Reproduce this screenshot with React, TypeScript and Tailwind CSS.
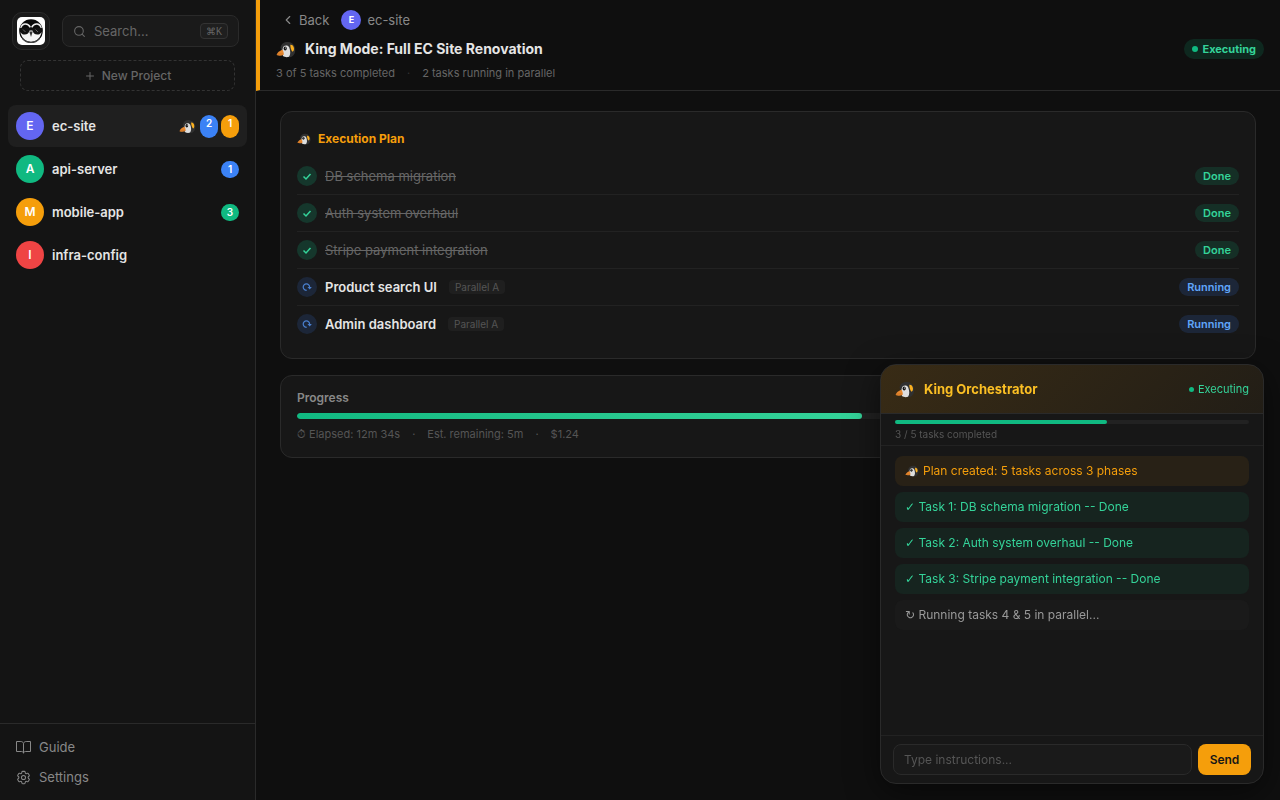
import React from "react";
import { ChevronLeft, Plus, Search } from "lucide-react";
import { clsx } from "clsx";

interface Project {
  name: string;
  letter: string;
  color: string;
  king?: boolean;
  badges: { count: number; color: string }[];
}

const projects: Project[] = [
  {
    name: "ec-site",
    letter: "E",
    color: "bg-[#6366f1]",
    king: true,
    badges: [
      { count: 2, color: "bg-[#3b82f6]" },
      { count: 1, color: "bg-[#f59e0b]" },
    ],
  },
  { name: "api-server", letter: "A", color: "bg-[#10b981]", badges: [{ count: 1, color: "bg-[#3b82f6]" }] },
  { name: "mobile-app", letter: "M", color: "bg-[#f59e0b]", badges: [{ count: 3, color: "bg-[#10b981]" }] },
  { name: "infra-config", letter: "I", color: "bg-[#ef4444]", badges: [] },
];

const tasks = [
  { title: "DB schema migration", done: true },
  { title: "Auth system overhaul", done: true },
  { title: "Stripe payment integration", done: true },
  { title: "Product search UI", done: false, group: "Parallel A" },
  { title: "Admin dashboard", done: false, group: "Parallel A" },
];

const doneMessages = [
  "Task 1: DB schema migration -- Done",
  "Task 2: Auth system overhaul -- Done",
  "Task 3: Stripe payment integration -- Done",
];

function Logo() {
  return (
    <svg viewBox="0 0 28 28" className="h-7 w-7" aria-hidden="true">
      <rect width="28" height="28" rx="5" fill="#fff" />
      <circle cx="14" cy="14" r="11.8" fill="#0a0a0a" />
      <path d="M3.500 15.500C5 22 9 24.700 14 24.700S23 22 24.500 15.500L21 12h-14z" fill="#f5f5f5" />
      <path d="M3.800 11.500C4.500 6.500 10.500 5 13.300 10.300M14.700 10.300C17.500 5 23.500 6.500 24.200 11.500" fill="none" stroke="#eee" strokeWidth="1.500" />
      <path d="M2.600 11.200c3.800-1.300 7.500-.9 11.400.6 3.900-1.500 7.600-1.900 11.400-.6 0 4-2 6.300-5 6.300-2.800 0-4.400-1.800-5-4.100h-2.800c-.6 2.300-2.200 4.100-5 4.100-3 0-5-2.300-5-6.300z" fill="#111" />
      <path d="M6 12.500l2.500 2.500M18.500 12.500L21 15" stroke="#777" strokeWidth="0.8" />
      <path d="M12.300 14.500h3.400L14 20z" fill="#333" />
      <path d="M5.500 21.500C8 24.500 11 25.500 14 25.500s6-1 8.500-4" fill="none" stroke="#444" strokeWidth="1.200" />
    </svg>
  );
}

function PenguinIcon({ className }: { className?: string }) {
  return (
    <svg viewBox="0 0 20 17" className={clsx("shrink-0", className)} aria-hidden="true">
      <path d="M4.500 6.500C5.500 2 9 .5 12.500 1c4 .6 6.500 3.500 6.700 7.500.2 4-2 7.700-5.700 7.700L7 14z" fill="#303030" />
      <path d="M14.300 3.800c2.200-.2 3.600 1.500 3.700 4 0 1.500-.6 2.600-1.500 3-1.400-1.500-2.200-4.500-2.200-7z" fill="#fbb01f" />
      <path d="M7.300 5.800C9 4.200 12 4 13.200 6.500c1.300 3 1.600 7-.2 9.200-1.800.8-4.500.5-6-.7-1-2.500-1-6.500.3-9.200z" fill="#dedede" />
      <path d="M6.300 8.800C3.500 9.800 1.300 11.500.6 14c2 .9 4.800.9 7-.2.4-2-.2-4-1.300-5z" fill="#e8892f" />
      <path d="M1 13.300c2-.4 4.300-.5 6.500-.2" fill="none" stroke="#b8651e" strokeWidth="0.5" />
      <ellipse cx="9.200" cy="7.600" rx="1.600" ry="2" fill="#161616" />
      <circle cx="9.600" cy="7" r="0.500" fill="#fff" />
    </svg>
  );
}

function BookIcon() {
  return (
    <svg viewBox="0 0 15 15" className="h-[15px] w-[15px]" fill="none" stroke="currentColor" aria-hidden="true">
      <path d="M7.500 3.200C7 2.200 6 1.500 4.800 1.500H.5v10h4.800c1.300 0 2.200.6 2.200 1.700 0-1.100.9-1.700 2.200-1.700h4.800v-10h-4.300c-1.200 0-2.200.7-2.700 1.700zM7.500 3.200v10" />
    </svg>
  );
}

function GearIcon() {
  return (
    <svg viewBox="1 1 22 22" className="h-[15px] w-[15px]" fill="none" stroke="currentColor" strokeWidth="1.5" strokeLinecap="round" strokeLinejoin="round" aria-hidden="true">
      <path d="M9.594 3.940c.090-.542.560-.940 1.110-.940h2.593c.550 0 1.020.398 1.110.940l.213 1.281c.063.374.313.686.645.870.074.040.147.083.220.127.325.196.720.257 1.075.124l1.217-.456a1.125 1.125 0 0 1 1.370.490l1.296 2.247a1.125 1.125 0 0 1-.260 1.431l-1.003.827c-.293.241-.438.613-.430.992a7.723 7.723 0 0 1 0 .255c-.008.378.137.750.430.991l1.004.827c.424.350.534.955.260 1.430l-1.298 2.247a1.125 1.125 0 0 1-1.369.491l-1.217-.456c-.355-.133-.750-.072-1.076.124a6.470 6.470 0 0 1-.220.128c-.331.183-.581.495-.644.869l-.213 1.281c-.090.543-.560.940-1.110.940h-2.594c-.550 0-1.019-.398-1.110-.940l-.213-1.281c-.062-.374-.312-.686-.644-.870a6.520 6.520 0 0 1-.220-.127c-.325-.196-.720-.257-1.076-.124l-1.217.456a1.125 1.125 0 0 1-1.369-.490l-1.297-2.247a1.125 1.125 0 0 1 .260-1.431l1.004-.827c.292-.240.437-.613.430-.991a6.932 6.932 0 0 1 0-.255c.007-.380-.138-.751-.430-.992l-1.004-.827a1.125 1.125 0 0 1-.260-1.430l1.297-2.247a1.125 1.125 0 0 1 1.370-.491l1.216.456c.356.133.751.072 1.076-.124.072-.044.146-.086.220-.128.332-.183.582-.495.644-.869l.214-1.280Z" />
      <circle cx="12" cy="12" r="3" />
    </svg>
  );
}

function Sidebar() {
  return (
    <aside className="flex w-64 shrink-0 flex-col border-r border-[#2a2a2a] bg-[#141414]">
      <div className="flex items-center gap-3 py-3 pr-4 pl-3">
        <button aria-label="Home" className="flex h-[38px] w-[38px] shrink-0 items-center justify-center rounded-[10px] border border-[#2a2a2a] bg-[#1a1a1a]">
          <Logo />
        </button>
        <button className="flex h-8 flex-1 items-center gap-2 rounded-lg border border-[#2a2a2a] bg-[#1a1a1a] px-2.5 text-[13px] leading-5 text-[#666]">
          <Search className="h-[13px] w-[13px]" />
          Search...
          <kbd className="ml-auto flex h-4 items-center rounded border border-[#333] bg-[#1f1f1f] px-[5px] font-sans text-[10px] text-[#666]">⌘K</kbd>
        </button>
      </div>
      <button className="mx-5 -mt-0.5 flex h-[31px] items-center justify-center gap-1.5 rounded-lg border border-dashed border-[#333] text-xs font-medium text-[#666]">
        <Plus className="h-3 w-3" />
        New Project
      </button>
      <nav className="mt-3.5 flex flex-1 flex-col gap-px px-2">
        {projects.map((project) => (
          <button
            key={project.name}
            className={clsx("flex h-[42px] items-center gap-2 rounded-lg px-2 text-left", project.king && "bg-[#1f1f1f]")}
          >
            <span className={clsx("flex h-7 w-7 items-center justify-center rounded-full text-xs font-semibold text-white", project.color)}>
              {project.letter}
            </span>
            <span className="flex-1 text-[13px] leading-5 font-semibold text-[#e5e5e5]">{project.name}</span>
            <span className="flex gap-[3px]">
              {project.king && <PenguinIcon className="mr-px h-[23px] w-[17px]" />}
              {project.badges.map((badge, i) => (
                <span key={i} className={clsx("min-w-[18px] rounded-full text-center text-[10px] leading-[17px] font-semibold text-white", badge.color)}>
                  {badge.count}
                </span>
              ))}
            </span>
          </button>
        ))}
      </nav>
      <div className="border-t border-[#2a2a2a] px-4 py-2 text-[13px] leading-5 text-[#888]">
        <a href="#guide" className="flex h-[30px] items-center gap-2">
          <BookIcon />
          Guide
        </a>
        <a href="#settings" className="flex h-[30px] items-center gap-2">
          <GearIcon />
          Settings
        </a>
      </div>
    </aside>
  );
}

function Header() {
  return (
    <header className="border-b border-l-4 border-b-[#2a2a2a] border-l-[#f59e0b] px-4 pt-2.5 pb-2">
      <div className="flex h-5 items-center text-[13px] leading-5 text-[#888]">
        <button className="ml-[5px] flex items-center gap-1">
          <ChevronLeft className="h-3.5 w-3.5" />
          Back
        </button>
        <span className="mr-1.5 ml-3 flex h-5 w-5 items-center justify-center rounded-full bg-[#6366f1] text-[9px] font-bold text-white">E</span>
        ec-site
      </div>
      <div className="mt-2 flex h-[22px] items-center">
        <h1 className="flex items-center gap-[9px] text-sm font-bold text-[#e5e5e5]">
          <PenguinIcon className="h-[17px] w-5" />
          King Mode: Full EC Site Renovation
        </h1>
        <span className="ml-auto flex h-5 items-center gap-1 rounded-full bg-[#10b981]/15 px-2 text-[11px] font-bold text-[#34d399]">
          <span className="h-1.5 w-1.5 rounded-full bg-[#10b981]" />
          Executing
        </span>
      </div>
      <div className="mt-1 flex h-[18px] items-center gap-3 text-[11px] text-[#666]">
        <span>3 of 5 tasks completed</span>
        <span className="text-[#333]">·</span>
        <span>2 tasks running in parallel</span>
      </div>
    </header>
  );
}

function TaskRow({ task }: { task: (typeof tasks)[number] }) {
  return (
    <li className="flex items-center gap-2 border-b border-[#222] py-2 last:border-b-0">
      <span
        className={clsx(
          "flex h-5 w-5 items-center justify-center rounded-full",
          task.done ? "bg-[#10b981]/20 text-[#34d399]" : "bg-[#3b82f6]/15 text-[#4a80cf]"
        )}
      >
        <svg viewBox="0 0 10 10" className="h-2.5 w-2.5" fill="none" stroke="currentColor" aria-hidden="true">
          {task.done ? (
            <path d="M1.500 5.500L4 8l4.500-5" strokeWidth="1.500" />
          ) : (
            <>
              <path d="M4.800 8.200A3.200 3.200 0 1 1 7.600 5.200" strokeWidth="1.200" />
              <path d="M5.500 5h4.300L7.700 7.500z" fill="currentColor" stroke="none" />
            </>
          )}
        </svg>
      </span>
      <span className={clsx("text-[13px] leading-5", task.done ? "text-[#666] line-through" : "font-semibold text-[#e5e5e5]")}>{task.title}</span>
      {task.group && <span className="ml-1 rounded bg-[#1f1f1f] px-1.5 text-[10px] leading-[14px] text-[#555]">{task.group}</span>}
      <span
        className={clsx(
          "ml-auto rounded-full px-2 text-[11px] leading-[18px] font-semibold",
          task.done ? "bg-[#10b981]/15 text-[#34d399]" : "bg-[#3b82f6]/15 text-[#60a5fa]"
        )}
      >
        {task.done ? "Done" : "Running"}
      </span>
    </li>
  );
}

function OrchestratorPanel() {
  return (
    <section className="fixed right-4 bottom-4 flex h-[420px] w-96 flex-col overflow-hidden rounded-2xl border border-[#2a2a2a] bg-[#171717] shadow-[0_8px_32px_rgba(0,0,0,0.5)]">
      <div className="flex h-[49px] items-center gap-[9px] border-b border-[#2a2a2a] bg-linear-135 from-[#f59e0b]/15 to-[#f59e0b]/5 px-3.5">
        <PenguinIcon className="h-[17px] w-5" />
        <h2 className="text-[13px] leading-5 font-bold text-[#fbbf24]">King Orchestrator</h2>
        <span className="ml-auto flex items-center gap-1 text-[11px] text-[#34d399]">
          <span className="h-[5px] w-[5px] rounded-full bg-[#10b981]" />
          Executing
        </span>
      </div>
      <div className="border-b border-[#222] px-3.5 pt-1.5 pb-1">
        <div className="h-1 rounded-sm bg-[#222]">
          <div className="h-1 w-3/5 rounded-sm bg-[#10b981]" />
        </div>
        <p className="mt-1 text-[10px] leading-[13px] text-[#555]">3 / 5 tasks completed</p>
      </div>
      <div className="flex flex-1 flex-col gap-1.5 px-3.5 py-2.5 text-xs leading-[18px]">
        <p className="flex h-[30px] items-center gap-1 rounded-lg bg-[#f59e0b]/8 px-2.5 text-[#f59e0b]">
          <PenguinIcon className="h-3 w-3.5" />
          Plan created: 5 tasks across 3 phases
        </p>
        {doneMessages.map((message) => (
          <p key={message} className="h-[30px] rounded-lg bg-[#10b981]/8 px-2.5 py-1.5 text-[#34d399]">
            <span className="font-['DejaVu_Sans',sans-serif]">✓</span> {message}
          </p>
        ))}
        <p className="h-[30px] rounded-lg bg-[#1a1a1a] px-2.5 py-1.5 text-[#999]">
          <span className="font-['DejaVu_Sans',sans-serif]">↻</span> Running tasks 4 &amp; 5 in parallel...
        </p>
      </div>
      <form className="flex gap-1.5 border-t border-[#222] px-3 py-2" onSubmit={(e) => e.preventDefault()}>
        <input
          type="text"
          aria-label="Instructions"
          placeholder="Type instructions..."
          className="h-[31px] min-w-0 flex-1 rounded-lg border border-[#2a2a2a] bg-[#1a1a1a] px-2.5 text-xs text-[#e5e5e5] outline-none placeholder:text-[#555]"
        />
        <button type="submit" className="w-[53px] rounded-lg bg-[#f59e0b] text-xs font-semibold text-[#171717]">Send</button>
      </form>
    </section>
  );
}

export default function App() {
  return (
    <div className="flex min-h-screen bg-[#0f0f0f] font-['Inter',sans-serif] text-[#e5e5e5]">
      <Sidebar />
      <div className="min-w-0 flex-1">
        <Header />
        <main className="flex flex-col gap-4 px-6 py-5">
          <section className="rounded-xl border border-[#2a2a2a] bg-[#171717] p-4">
            <h2 className="mb-2 flex h-[22px] items-center gap-[7px] text-xs font-bold text-[#f59e0b]">
              <PenguinIcon className="h-3 w-3.5" />
              Execution Plan
            </h2>
            <ul>
              {tasks.map((task) => (
                <TaskRow key={task.title} task={task} />
              ))}
            </ul>
          </section>
          <section className="rounded-xl border border-[#2a2a2a] bg-[#171717] p-4">
            <h2 className="text-xs leading-3 font-semibold text-[#888]">Progress</h2>
            <div className="mt-[9px] mb-2 h-1.5 overflow-hidden rounded-full bg-[#222]">
              <div className="h-full w-3/5 rounded-full bg-linear-to-r from-[#10b981] to-[#34d399]" />
            </div>
            <div className="flex gap-3 text-[11px] leading-[14px] text-[#555]">
              <span>⏱ Elapsed: 12m 34s</span>
              <span>·</span>
              <span>Est. remaining: 5m</span>
              <span>·</span>
              <span>$1.24</span>
            </div>
          </section>
        </main>
      </div>
      <OrchestratorPanel />
    </div>
  );
}
